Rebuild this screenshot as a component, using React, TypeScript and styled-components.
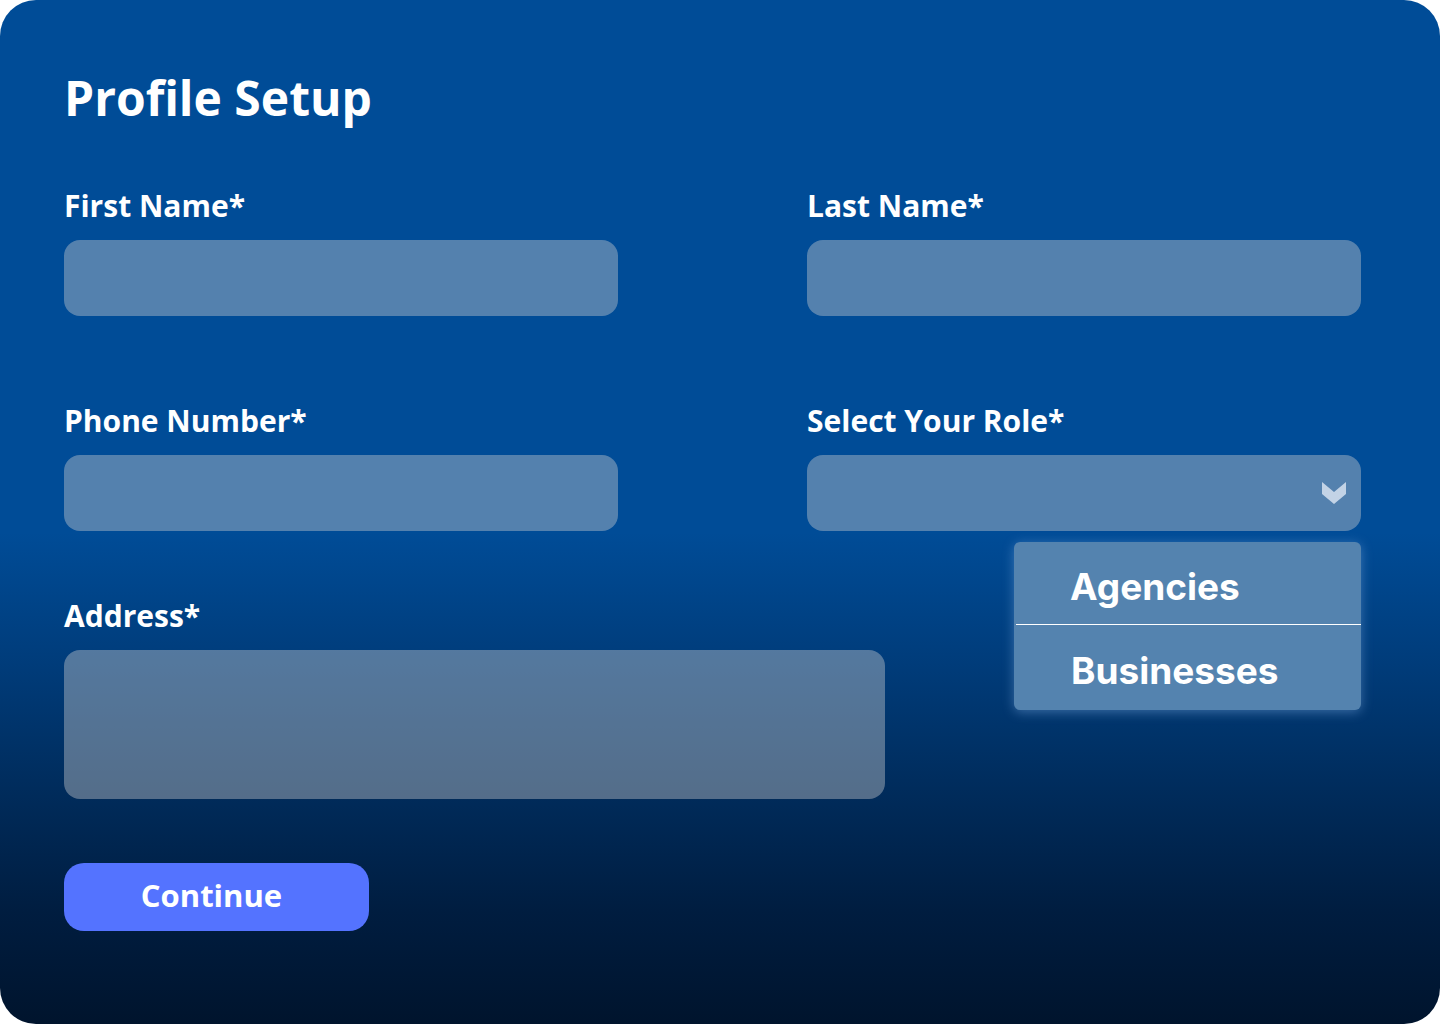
import styled, { createGlobalStyle } from "styled-components";

const GlobalStyle = createGlobalStyle`
  html, body {
    margin: 0;
    padding: 0;
    background: #ffffff;
  }
  * {
    box-sizing: border-box;
  }
`;

const Card = styled.main`
  width: 1440px;
  height: 1024px;
  border-radius: 36px;
  overflow: hidden;
  padding: 69px 79px 0 64px;
  font-family: "Open Sans", "Liberation Sans", sans-serif;
  color: #ffffff;
  background: linear-gradient(
    180deg,
    #004c97 0%,
    #004c97 52%,
    #003d7c 64%,
    #002c5c 77%,
    #001d40 89%,
    #00142d 100%
  );
`;

const Title = styled.h1`
  margin: 0 0 62px;
  font-size: 48px;
  line-height: 58px;
  font-weight: 700;
`;

const Grid = styled.div`
  display: grid;
  grid-template-columns: 554px 554px;
  column-gap: 189px;
  row-gap: 88px;
`;

const Field = styled.div<{ $wide?: boolean }>`
  position: relative;
  display: flex;
  flex-direction: column;
  gap: 17px;
  width: ${(p) => (p.$wide ? "821px" : "auto")};
  grid-column: ${(p) => (p.$wide ? "1 / -1" : "auto")};
  margin-top: ${(p) => (p.$wide ? "-20px" : "0")};
`;

const Label = styled.label`
  font-size: 30px;
  line-height: 34px;
  font-weight: 700;
`;

const Input = styled.div<{ $tall?: boolean }>`
  height: ${(p) => (p.$tall ? "149px" : "76px")};
  border-radius: 16px;
  background: rgba(210, 210, 210, 0.4);
  position: relative;
`;

const Chevron = styled.svg`
  position: absolute;
  right: 14px;
  top: 50%;
  transform: translateY(-50%);
`;

const Menu = styled.ul`
  position: absolute;
  top: calc(100% + 11px);
  right: 0;
  width: 347px;
  margin: 0;
  padding: 0;
  list-style: none;
  border-radius: 6px;
  background: #5483af;
  box-shadow: 0 2px 12px rgba(130, 175, 230, 0.45);
  overflow: hidden;
`;

const MenuItem = styled.li<{ $divider?: boolean }>`
  height: ${(p) => (p.$divider ? "83px" : "85px")};
  display: flex;
  align-items: center;
  padding-left: ${(p) => (p.$divider ? "54px" : "57px")};
  padding-top: 6px;
  font-family: Inter, "Liberation Sans", sans-serif;
  font-size: 37px;
  font-weight: 700;
  border-bottom: ${(p) => (p.$divider ? "1px solid #ffffff" : "none")};
  margin-left: ${(p) => (p.$divider ? "2px" : "0")};
`;

const Button = styled.button`
  margin-top: 64px;
  width: 305px;
  height: 68px;
  padding: 0 10px 4px 0;
  border: none;
  border-radius: 20px;
  background: #5473ff;
  color: #ffffff;
  font-family: "Open Sans", "Liberation Sans", sans-serif;
  font-size: 31px;
  font-weight: 700;
  cursor: pointer;
`;

export default function App() {
  return (
    <>
      <GlobalStyle />
      <Card>
        <Title>Profile Setup</Title>
        <Grid>
          <Field>
            <Label>First Name*</Label>
            <Input />
          </Field>
          <Field>
            <Label>Last Name*</Label>
            <Input />
          </Field>
          <Field>
            <Label>Phone Number*</Label>
            <Input />
          </Field>
          <Field>
            <Label>Select Your Role*</Label>
            <Input>
              <Chevron width="26" height="24" viewBox="0 0 26 24">
                <polygon
                  points="1,1 13,11 25,1 25,13 13,23 1,13"
                  fill="#c3d3e6"
                />
              </Chevron>
              <Menu>
                <MenuItem $divider>Agencies</MenuItem>
                <MenuItem>Businesses</MenuItem>
              </Menu>
            </Input>
          </Field>
          <Field $wide>
            <Label>Address*</Label>
            <Input $tall />
          </Field>
        </Grid>
        <Button>Continue</Button>
      </Card>
    </>
  );
}
